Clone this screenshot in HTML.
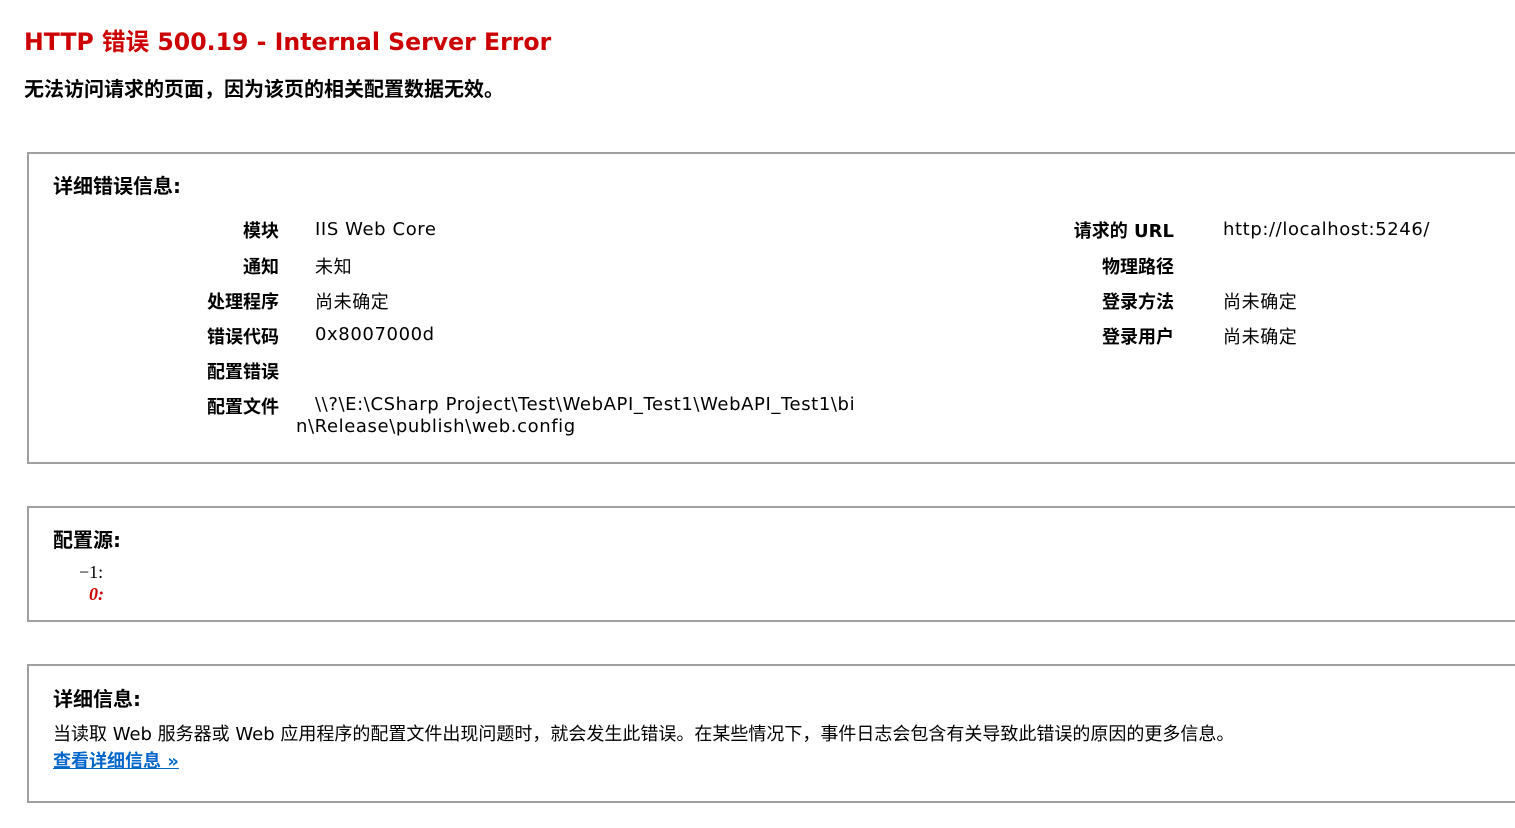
<!DOCTYPE html>
<html><head><meta charset="utf-8"><style>
html,body{margin:0;padding:0;width:1515px;height:828px;overflow:hidden;background:#fff}
body{font-family:"DejaVu Sans","Noto Sans CJK SC",sans-serif;color:#000;position:relative}
.a{position:absolute;white-space:nowrap;line-height:1}
.box{position:absolute;left:27px;width:1600px;border:2px solid #a0a0a0;border-right:none;box-sizing:border-box}
.h{font-weight:bold;font-size:20px}
.l{font-weight:bold;font-size:18px;text-align:right}
.v{font-size:18px;letter-spacing:0.6px}
</style></head><body>
<div class="a" style="left:24px;top:31px;color:#cc0000;font-weight:bold;font-size:23.6px">HTTP 错误 500.19 - Internal Server Error</div>
<div class="a" style="left:24px;top:79px;font-weight:bold;font-size:20px">无法访问请求的页面，因为该页的相关配置数据无效。</div>

<div class="box" style="top:152px;height:312px"></div>
<div class="a h" style="left:53px;top:176px">详细错误信息:</div>
<div class="a l" style="right:1236px;top:223px">模块</div>
<div class="a l" style="right:1236px;top:259px">通知</div>
<div class="a l" style="right:1236px;top:294px">处理程序</div>
<div class="a l" style="right:1236px;top:329px">错误代码</div>
<div class="a l" style="right:1236px;top:364px">配置错误</div>
<div class="a l" style="right:1236px;top:399px">配置文件</div>
<div class="a v" style="left:315px;top:221px">IIS Web Core</div>
<div class="a v" style="left:315px;top:259px">未知</div>
<div class="a v" style="left:315px;top:294px">尚未确定</div>
<div class="a v" style="left:315px;top:326px">0x8007000d</div>
<div class="a v" style="left:315px;top:396px">\\?\E:\CSharp Project\Test\WebAPI_Test1\WebAPI_Test1\bi</div>
<div class="a v" style="left:296px;top:418px">n\Release\publish\web.config</div>
<div class="a l" style="right:341px;top:223px">请求的 URL</div>
<div class="a l" style="right:341px;top:259px">物理路径</div>
<div class="a l" style="right:341px;top:294px">登录方法</div>
<div class="a l" style="right:341px;top:329px">登录用户</div>
<div class="a v" style="left:1223px;top:221px">http://localhost:5246/</div>
<div class="a v" style="left:1223px;top:294px">尚未确定</div>
<div class="a v" style="left:1223px;top:329px">尚未确定</div>

<div class="box" style="top:506px;height:116px"></div>
<div class="a h" style="left:53px;top:530px">配置源:</div>
<div class="a" style="left:79px;top:563px;font-family:'Liberation Serif',serif;font-size:18px">−1:</div>
<div class="a" style="left:89px;top:585px;font-family:'Liberation Serif',serif;font-size:18px;color:#cc0000;font-style:italic;font-weight:bold">0:</div>

<div class="box" style="top:664px;height:139px"></div>
<div class="a h" style="left:53px;top:689px">详细信息:</div>
<div class="a" style="left:53px;top:726px;font-size:18px">当读取 Web 服务器或 Web 应用程序的配置文件出现问题时，就会发生此错误。在某些情况下，事件日志会包含有关导致此错误的原因的更多信息。</div>
<div class="a" style="left:53px;top:753px;font-size:18px;font-weight:bold;color:#0066cc;text-decoration:underline">查看详细信息 »</div>
</body></html>
